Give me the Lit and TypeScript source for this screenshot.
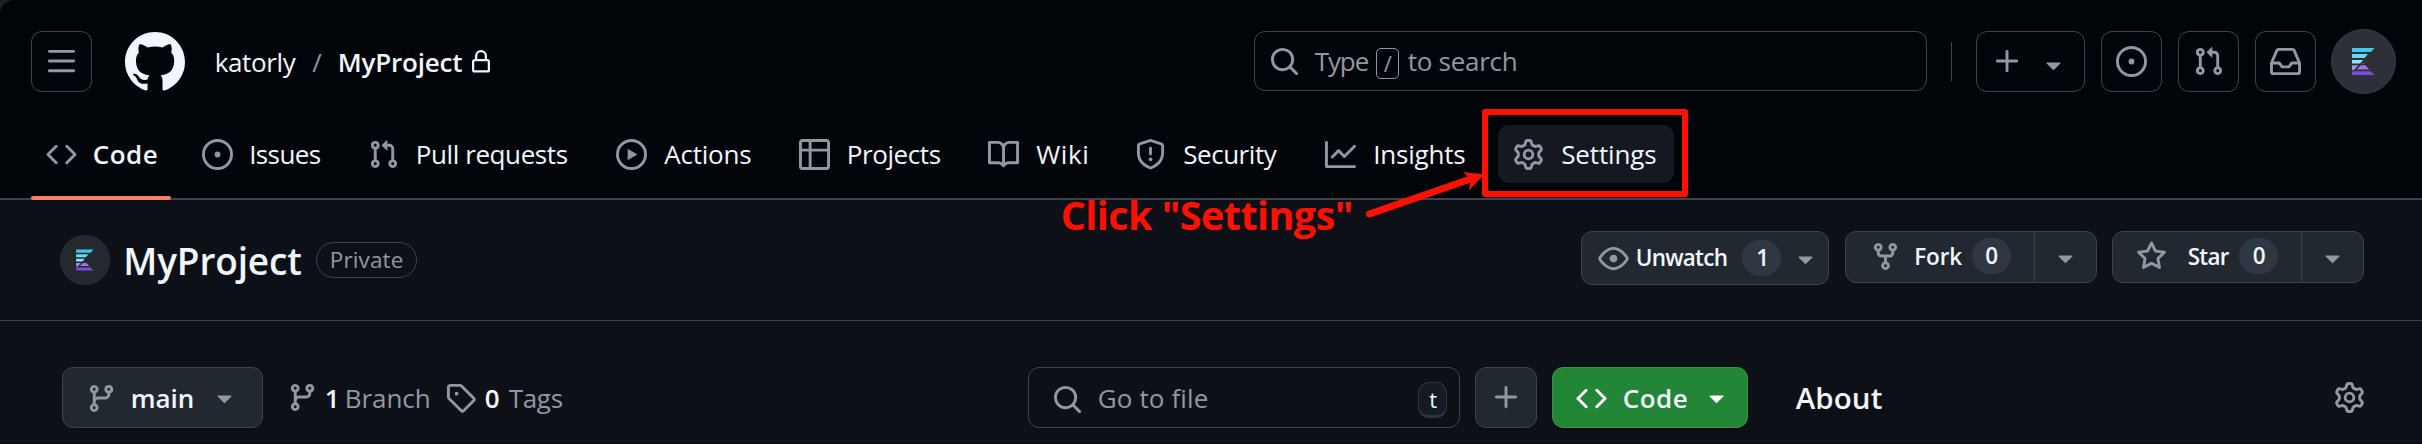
import { LitElement, html, css, svg } from "lit";
import { customElement, property } from "lit/decorators.js";
import { styleMap } from "lit/directives/style-map.js";

const ICONS: Record<string, string> = {
  bars: "M1 2.75A.75.75 0 0 1 1.75 2h12.5a.75.75 0 0 1 0 1.5H1.75A.75.75 0 0 1 1 2.75Zm0 5A.75.75 0 0 1 1.75 7h12.5a.75.75 0 0 1 0 1.5H1.75A.75.75 0 0 1 1 7.75ZM1.75 12h12.5a.75.75 0 0 1 0 1.5H1.75a.75.75 0 0 1 0-1.5Z",
  mark: "M8 0c4.42 0 8 3.58 8 8a8.013 8.013 0 0 1-5.45 7.59c-.4.08-.55-.17-.55-.38 0-.27.01-1.13.01-2.2 0-.75-.25-1.23-.54-1.48 1.78-.2 3.65-.88 3.65-3.95 0-.88-.31-1.59-.82-2.15.08-.2.36-1.02-.08-2.12 0 0-.67-.22-2.2.82-.64-.18-1.32-.27-2-.27-.68 0-1.36.09-2 .27-1.53-1.03-2.2-.82-2.2-.82-.44 1.1-.16 1.92-.08 2.12-.51.56-.82 1.28-.82 2.15 0 3.06 1.86 3.75 3.64 3.95-.23.2-.44.55-.51 1.07-.46.21-1.61.55-2.33-.66-.15-.24-.6-.83-1.23-.82-.67.01-.27.38.01.53.34.19.73.9.82 1.13.16.45.68 1.31 2.69.94 0 .67.01 1.3.01 1.49 0 .21-.15.45-.55.38A7.995 7.995 0 0 1 0 8c0-4.42 3.58-8 8-8Z",
  lock: "M4 4a4 4 0 0 1 8 0v2h.25c.966 0 1.75.784 1.75 1.75v5.5A1.75 1.75 0 0 1 12.25 15h-8.5A1.75 1.75 0 0 1 2 13.25v-5.5C2 6.784 2.784 6 3.75 6H4Zm8.25 3.5h-8.5a.25.25 0 0 0-.25.25v5.5c0 .138.112.25.25.25h8.5a.25.25 0 0 0 .25-.25v-5.5a.25.25 0 0 0-.25-.25ZM10.5 6V4a2.5 2.5 0 1 0-5 0v2Z",
  code: "m11.28 3.22 4.25 4.25a.75.75 0 0 1 0 1.06l-4.25 4.25a.749.749 0 0 1-1.275-.326.749.749 0 0 1 .215-.734L13.94 8l-3.72-3.72a.749.749 0 0 1 .326-1.275.749.749 0 0 1 .734.215Zm-6.56 0a.751.751 0 0 1 1.042.018.751.751 0 0 1 .018 1.042L2.06 8l3.72 3.72a.749.749 0 0 1-.326 1.275.749.749 0 0 1-.734-.215L.47 8.53a.75.75 0 0 1 0-1.06Z",
  issue: "M8 9.5a1.5 1.5 0 1 0 0-3 1.5 1.5 0 0 0 0 3ZM8 0a8 8 0 1 1 0 16A8 8 0 0 1 8 0ZM1.5 8a6.5 6.5 0 1 0 13 0 6.5 6.5 0 0 0-13 0Z",
  pull: "M1.5 3.25a2.25 2.25 0 1 1 3 2.122v5.256a2.251 2.251 0 1 1-1.5 0V5.372A2.25 2.25 0 0 1 1.5 3.25Zm5.677-.177L9.573.677A.25.25 0 0 1 10 .854V2.5h1A2.5 2.5 0 0 1 13.5 5v5.628a2.251 2.251 0 1 1-1.5 0V5a1 1 0 0 0-1-1h-1v1.646a.25.25 0 0 1-.427.177L7.177 3.427a.25.25 0 0 1 0-.354ZM3.75 2.5a.75.75 0 1 0 0 1.5.75.75 0 0 0 0-1.5Zm0 9.5a.75.75 0 1 0 0 1.5.75.75 0 0 0 0-1.5Zm8.25.75a.75.75 0 1 0 1.5 0 .75.75 0 0 0-1.5 0Z",
  play: "M8 0a8 8 0 1 1 0 16A8 8 0 0 1 8 0ZM1.5 8a6.5 6.5 0 1 0 13 0 6.5 6.5 0 0 0-13 0Zm4.879-2.773 4.264 2.559a.25.25 0 0 1 0 .428l-4.264 2.559A.25.25 0 0 1 6 10.559V5.442a.25.25 0 0 1 .379-.215Z",
  table: "M0 1.75C0 .784.784 0 1.75 0h12.5C15.216 0 16 .784 16 1.75v12.5A1.75 1.75 0 0 1 14.25 16H1.75A1.75 1.75 0 0 1 0 14.25ZM6.5 6.5v8h7.75a.25.25 0 0 0 .25-.25V6.5Zm8-1.5V1.75a.25.25 0 0 0-.25-.25H6.5V5Zm-13 1.5v7.75c0 .138.112.25.25.25H5v-8ZM5 5V1.5H1.75a.25.25 0 0 0-.25.25V5Z",
  book: "M0 1.75A.75.75 0 0 1 .75 1h4.253c1.227 0 2.317.59 3 1.501A3.743 3.743 0 0 1 11.006 1h4.245a.75.75 0 0 1 .75.75v10.5a.75.75 0 0 1-.75.75h-4.507a2.25 2.25 0 0 0-1.591.659l-.622.621a.75.75 0 0 1-1.06 0l-.622-.621A2.25 2.25 0 0 0 5.258 13H.75a.75.75 0 0 1-.75-.75Zm7.251 10.324.004-5.073-.002-2.253A2.25 2.25 0 0 0 5.003 2.5H1.5v9h3.757a3.75 3.75 0 0 1 1.994.574ZM8.755 4.75l-.004 7.322a3.752 3.752 0 0 1 1.992-.572H14.5v-9h-3.495a2.25 2.25 0 0 0-2.25 2.25Z",
  shield: "M7.467.133a1.748 1.748 0 0 1 1.066 0l5.25 1.68A1.75 1.75 0 0 1 15 3.48V7c0 1.566-.32 3.182-1.303 4.682-.983 1.498-2.585 2.813-5.032 3.855a1.697 1.697 0 0 1-1.33 0c-2.447-1.042-4.049-2.357-5.032-3.855C1.32 10.182 1 8.566 1 7V3.48a1.75 1.75 0 0 1 1.217-1.667Zm.61 1.429a.25.25 0 0 0-.153 0l-5.25 1.68a.25.25 0 0 0-.174.238V7c0 1.358.275 2.666 1.057 3.86.784 1.194 2.121 2.34 4.366 3.297a.196.196 0 0 0 .154 0c2.245-.956 3.582-2.104 4.366-3.298C13.225 9.666 13.5 8.36 13.5 7V3.48a.251.251 0 0 0-.174-.237l-5.25-1.68ZM8.75 4.75v3a.75.75 0 0 1-1.5 0v-3a.75.75 0 0 1 1.5 0ZM9 10.5a1 1 0 1 1-2 0 1 1 0 0 1 2 0Z",
  graph: "M1.5 1.75V13.5h13.75a.75.75 0 0 1 0 1.5H.75a.75.75 0 0 1-.75-.75V1.75a.75.75 0 0 1 1.5 0Zm14.28 2.53-5.25 5.25a.75.75 0 0 1-1.06 0L7 7.06 4.28 9.78a.751.751 0 0 1-1.042-.018.751.751 0 0 1-.018-1.042l3.25-3.25a.75.75 0 0 1 1.06 0L10 7.94l4.72-4.72a.751.751 0 0 1 1.042.018.751.751 0 0 1 .018 1.042Z",
  gear: "M8 0a8.2 8.2 0 0 1 .701.031C9.444.095 9.99.645 10.16 1.29l.288 1.107c.018.066.079.158.212.224.231.114.454.243.668.386.123.082.233.09.299.071l1.103-.303c.644-.176 1.392.021 1.82.63.27.385.506.792.704 1.218.315.675.111 1.422-.364 1.891l-.814.806c-.049.048-.098.147-.088.294.016.257.016.515 0 .772-.01.147.038.246.088.294l.814.806c.475.469.679 1.216.364 1.891a7.977 7.977 0 0 1-.704 1.217c-.428.61-1.176.807-1.82.63l-1.102-.302c-.067-.019-.177-.011-.3.071a5.909 5.909 0 0 1-.668.386c-.133.066-.194.158-.211.224l-.29 1.106c-.168.646-.715 1.196-1.458 1.26a8.006 8.006 0 0 1-1.402 0c-.743-.064-1.289-.614-1.458-1.26l-.289-1.106c-.018-.066-.079-.158-.212-.224a5.738 5.738 0 0 1-.668-.386c-.123-.082-.233-.09-.299-.071l-1.103.303c-.644.176-1.392-.021-1.82-.63a8.12 8.12 0 0 1-.704-1.218c-.315-.675-.111-1.422.363-1.891l.815-.806c.05-.048.098-.147.088-.294a6.214 6.214 0 0 1 0-.772c.01-.147-.038-.246-.088-.294l-.815-.806C.635 6.045.431 5.298.746 4.623a7.92 7.92 0 0 1 .704-1.217c.428-.61 1.176-.807 1.82-.63l1.102.302c.067.019.177.011.3-.071.214-.143.437-.272.668-.386.133-.066.194-.158.211-.224l.29-1.106C6.009.645 6.556.095 7.299.03 7.53.01 7.764 0 8 0Zm-.571 1.525c-.036.003-.108.036-.137.146l-.289 1.105c-.147.561-.549.967-.998 1.189-.173.086-.34.183-.5.29-.417.278-.97.423-1.529.27l-1.103-.303c-.109-.03-.175.016-.195.045-.22.312-.412.644-.573.99-.014.031-.021.11.059.19l.815.806c.411.406.562.957.53 1.456a4.709 4.709 0 0 0 0 .582c.032.499-.119 1.05-.53 1.456l-.815.806c-.081.08-.073.159-.059.19.162.346.353.677.573.989.02.03.085.076.195.046l1.102-.303c.56-.153 1.113-.008 1.53.27.161.107.328.204.501.29.447.222.85.629.997 1.189l.289 1.105c.029.109.101.143.137.146a6.6 6.6 0 0 0 1.142 0c.036-.003.108-.036.137-.146l.289-1.105c.147-.561.549-.967.998-1.189.173-.086.34-.183.5-.29.417-.278.97-.423 1.529-.27l1.103.303c.109.029.175-.016.195-.045.22-.313.411-.644.573-.99.014-.031.021-.11-.059-.19l-.815-.806c-.411-.406-.562-.957-.53-1.456a4.709 4.709 0 0 0 0-.582c-.032-.499.119-1.05.53-1.456l.815-.806c.081-.08.073-.159.059-.19a6.464 6.464 0 0 0-.573-.989c-.02-.03-.085-.076-.195-.046l-1.102.303c-.56.153-1.113.008-1.53-.27a4.44 4.44 0 0 0-.501-.29c-.447-.222-.85-.629-.997-1.189l-.289-1.105c-.029-.11-.101-.143-.137-.146a6.6 6.6 0 0 0-1.142 0ZM11 8a3 3 0 1 1-6 0 3 3 0 0 1 6 0ZM9.5 8a1.5 1.5 0 1 0-3.001.001A1.5 1.5 0 0 0 9.5 8Z",
  search: "M10.68 11.74a6 6 0 0 1-7.922-8.982 6 6 0 0 1 8.982 7.922l3.04 3.04a.749.749 0 0 1-.326 1.275.749.749 0 0 1-.734-.215ZM11.5 7a4.499 4.499 0 1 0-8.997 0A4.499 4.499 0 0 0 11.5 7Z",
  plus: "M7.75 2a.75.75 0 0 1 .75.75V7h4.25a.75.75 0 0 1 0 1.5H8.5v4.25a.75.75 0 0 1-1.5 0V8.5H2.75a.75.75 0 0 1 0-1.5H7V2.75A.75.75 0 0 1 7.75 2Z",
  caret: "m4.427 7.427 3.396 3.396a.25.25 0 0 0 .354 0l3.396-3.396A.25.25 0 0 0 11.396 7H4.604a.25.25 0 0 0-.177.427Z",
  inbox: "M2.8 2.06A1.75 1.75 0 0 1 4.41 1h7.18c.7 0 1.333.417 1.61 1.06l2.74 6.395c.04.093.06.194.06.295v4.5A1.75 1.75 0 0 1 14.25 15H1.75A1.75 1.75 0 0 1 0 13.25v-4.5c0-.101.02-.202.06-.295Zm1.61.44a.25.25 0 0 0-.23.152L1.887 8H4.75a.75.75 0 0 1 .6.3L6.625 10h2.75l1.275-1.7a.75.75 0 0 1 .6-.3h2.863L11.82 2.652a.25.25 0 0 0-.23-.152Zm10.09 7h-2.875l-1.275 1.7a.75.75 0 0 1-.6.3h-3.5a.75.75 0 0 1-.6-.3L4.375 9.5H1.5v3.75c0 .138.112.25.25.25h12.5a.25.25 0 0 0 .25-.25Z",
  eye: "M8 2c1.981 0 3.671.992 4.933 2.078 1.27 1.091 2.187 2.345 2.637 3.023a1.62 1.62 0 0 1 0 1.798c-.45.678-1.367 1.932-2.637 3.023C11.67 13.008 9.981 14 8 14c-1.981 0-3.671-.992-4.933-2.078C1.797 10.83.88 9.576.43 8.898a1.62 1.62 0 0 1 0-1.798c.45-.677 1.367-1.931 2.637-3.022C4.33 2.992 6.019 2 8 2ZM1.679 7.932a.12.12 0 0 0 0 .136c.411.622 1.241 1.75 2.366 2.717C5.176 11.758 6.527 12.5 8 12.5c1.473 0 2.825-.742 3.955-1.715 1.124-.967 1.954-2.096 2.366-2.717a.12.12 0 0 0 0-.136c-.412-.621-1.242-1.75-2.366-2.717C10.824 4.242 9.473 3.5 8 3.5c-1.473 0-2.825.742-3.955 1.715-1.124.967-1.954 2.096-2.366 2.717ZM8 10a2 2 0 1 1-.001-3.999A2 2 0 0 1 8 10Z",
  fork: "M5 5.372v.878c0 .414.336.75.75.75h4.5a.75.75 0 0 0 .75-.75v-.878a2.25 2.25 0 1 1 1.5 0v.878a2.25 2.25 0 0 1-2.25 2.25h-1.5v2.128a2.251 2.251 0 1 1-1.5 0V8.5h-1.5A2.25 2.25 0 0 1 3.5 6.25v-.878a2.25 2.25 0 1 1 1.5 0ZM5 3.25a.75.75 0 1 0-1.5 0 .75.75 0 0 0 1.5 0Zm6.75.75a.75.75 0 1 0 0-1.5.75.75 0 0 0 0 1.5Zm-3 8.75a.75.75 0 1 0-1.5 0 .75.75 0 0 0 1.5 0Z",
  star: "M8 .25a.75.75 0 0 1 .673.418l1.882 3.815 4.21.612a.75.75 0 0 1 .416 1.279l-3.046 2.97.719 4.192a.751.751 0 0 1-1.088.791L8 12.347l-3.766 1.98a.75.75 0 0 1-1.088-.79l.72-4.194L.818 6.374a.75.75 0 0 1 .416-1.28l4.21-.611L7.327.668A.75.75 0 0 1 8 .25Zm0 2.445L6.615 5.5a.75.75 0 0 1-.564.41l-3.097.45 2.24 2.184a.75.75 0 0 1 .216.664l-.528 3.084 2.769-1.456a.75.75 0 0 1 .698 0l2.77 1.456-.53-3.084a.75.75 0 0 1 .216-.664l2.24-2.183-3.096-.45a.75.75 0 0 1-.564-.41L8 2.694Z",
  branch: "M9.5 3.25a2.25 2.25 0 1 1 3 2.122V6A2.5 2.5 0 0 1 10 8.5H6a1 1 0 0 0-1 1v1.128a2.251 2.251 0 1 1-1.5 0V5.372a2.25 2.25 0 1 1 1.5 0v1.836A2.493 2.493 0 0 1 6 7h4a1 1 0 0 0 1-1v-.628A2.25 2.25 0 0 1 9.5 3.25Zm-6 0a.75.75 0 1 0 1.5 0 .75.75 0 0 0-1.5 0Zm8.25-.75a.75.75 0 1 0 0 1.5.75.75 0 0 0 0-1.5ZM4.25 12a.75.75 0 1 0 0 1.5.75.75 0 0 0 0-1.5Z",
  tag: "M1 7.775V2.75C1 1.784 1.784 1 2.75 1h5.025c.464 0 .91.184 1.238.513l6.25 6.25a1.75 1.75 0 0 1 0 2.474l-5.026 5.026a1.75 1.75 0 0 1-2.474 0l-6.25-6.25A1.752 1.752 0 0 1 1 7.775Zm1.5 0c0 .066.026.13.073.177l6.25 6.25a.25.25 0 0 0 .354 0l5.025-5.025a.25.25 0 0 0 0-.354l-6.25-6.25a.25.25 0 0 0-.177-.073H2.75a.25.25 0 0 0-.25.25ZM6 5a1 1 0 1 1 0 2 1 1 0 0 1 0-2Z",
};

const FAMILY = '"Open Sans", "Noto Sans", sans-serif';
const pen = document.createElement("canvas").getContext("2d")!;

/** Text whose glyphs span exactly `width` pixels, tracked evenly. */
function label(text: string, width: number, size = 26, weight = 400, cls = "") {
  pen.font = `${weight} ${size}px ${FAMILY}`;
  const m = pen.measureText(text);
  const ink = m.actualBoundingBoxRight + m.actualBoundingBoxLeft;
  const tracking = text.length > 1 ? (width - ink) / (text.length - 1) : 0;
  return html`<span class="label ${cls}" style=${styleMap({
    width: `${width}px`,
    fontSize: `${size}px`,
    fontWeight: `${weight}`,
    letterSpacing: `${tracking.toFixed(3)}px`,
    textIndent: `${(m.actualBoundingBoxLeft + 0.7).toFixed(2)}px`,
  })}>${text}</span>`;
}

const icon = (name: string, cls = "") =>
  html`<svg class="icon ${cls}" viewBox="0 0 16 16" aria-hidden="true"><path d=${ICONS[name]}></path></svg>`;

@customElement("user-avatar")
class UserAvatar extends LitElement {
  @property({ type: Boolean, reflect: true }) small = false;
  static styles = css`
    :host { display: block; flex: none; width: 65px; height: 65px; --disc: #2d3036; --rim: #3a3d42; }
    :host([small]) { width: 50px; height: 50px; --disc: #25282d; --rim: #313439; }
    svg { display: block; width: 100%; height: 100%; }
    .disc { fill: var(--disc); stroke: var(--rim); }
  `;
  render() {
    return html`<svg viewBox="0 0 65 65">
      <circle class="disc" cx="32.5" cy="32.5" r="32"></circle>
      ${svg`<path fill="#41c9ec" d="M21 19h22.5l-3.6 4H21z"/>
      <path fill="#66daf3" d="M21 25h16l-3.4 4H21z"/>
      <path fill="#8fe2f8" d="M21 31h11.2l-3.2 3.6h-8z"/>
      <path fill="#9a93ea" d="M21 36.300h6.300L23 41h-2z"/>
      <path fill="#9c74e8" d="M29.800 36.300h4.600L38.200 40.400H25.800zM31.200 34.900l.9-1.200.9 1.200z"/>
      <path fill="#7a4bdd" d="M21 42.200h18.600L43.500 46H21z"/>`}
    </svg>`;
  }
}

// icon, text, glyph span, slot width, space between icon and text
const TABS: [string, string, number, number, number][] = [
  ["code", "Code", 63, 140, 16],
  ["issue", "Issues", 69.5, 149.5, 17.5],
  ["pull", "Pull requests", 150, 232.5, 18.5],
  ["play", "Actions", 87, 167, 16.5],
  ["table", "Projects", 92, 173, 18],
  ["book", "Wiki", 51, 131, 16.5],
  ["shield", "Security", 93.5, 174, 17.5],
  ["graph", "Insights", 90, 172, 18.5],
  ["gear", "Settings", 94, 176, 17.5],
];

@customElement("app-root")
class AppRoot extends LitElement {
  static styles = css`
    :host {
      display: block; position: relative; width: 2422px; height: 444px; overflow: hidden;
      background: #202022; color: #f0f6fc; font-family: "Open Sans", "Noto Sans", sans-serif;
    }
    * { box-sizing: border-box; }
    .label { display: block; flex: none; white-space: nowrap; line-height: 36px; }
    .muted { color: #9198a1; }
    .icon { display: block; flex: none; width: 31px; height: 31px; fill: #9198a1; }
    .row { display: flex; align-items: center; }
    .box { display: flex; align-items: center; flex: none; height: 61px; border: 1px solid #3d444d; border-radius: 11px; }

    header { height: 200px; background: #010409; border-bottom: 2px solid #3d444d; border-radius: 14px 0 0 0; }
    .top { height: 123px; padding: 0 26px 0 31px; }
    .square { width: 61px; justify-content: center; }
    .mark { width: 60px; height: 60px; fill: #f0f6fc; margin: 1px 31px 0 33px; }
    .slash { margin: 0 16.500px 0 15.500px; }
    .lock { width: 24px; height: 24px; fill: #f0f6fc; margin: 0 0 0 7px; }
    .search { width: 673px; height: 60px; margin: 0 24px 1px auto; padding-left: 14px; }
    .search .icon { margin-right: 14px; }
    .key { display: flex; align-items: center; justify-content: center; width: 23px; height: 31px; margin: 4px 8px 0; border: 1px solid #9198a1; border-radius: 5px; }
    .rule { width: 1px; height: 39px; background: #3d444d; margin-right: 24px; }
    .create { width: 109px; padding-left: 15px; gap: 15px; }
    .create .caret { margin-top: 5px; }
    .tools { gap: 16px; }
    .top user-avatar { margin-left: 15px; }

    nav { display: flex; height: 75px; padding: 2px 0 0 31px; gap: 16px; }
    .tab { display: flex; align-items: center; height: 58px; padding-left: 15px; border-radius: 11px; position: relative; }
    .tab:last-child { background: #151820; }
    .tab:first-child::after { content: ""; position: absolute; left: 0; right: 0; bottom: -17px; height: 4px; border-radius: 2px; background: #f78166; }

    .repo { display: flex; height: 121px; padding: 0 58px 0 60px; background: #0d1117; border-bottom: 1px solid #3d444d; }
    .title { gap: 15.500px; }
    .title > .label { margin-top: 2px; }
    .pill { display: flex; align-items: center; justify-content: center; width: 101px; height: 36px; border: 1px solid #3d444d; border-radius: 18px; }
    .actions { display: flex; align-items: flex-start; gap: 15.500px; margin: 31px 0 0 auto; }
    .button { background: #212830; }
    .watch { width: 248px; height: 54px; padding-left: 16px; }
    .watch .icon { margin-right: 7px; }
    .count { display: flex; align-items: center; justify-content: center; width: 39px; height: 36px; border-radius: 18px; background: #2f3742; }
    .watch .count { margin: 0 9px 0 16px; }
    .split { width: 252px; height: 52px; }
    .half { display: flex; align-items: center; width: 189px; height: 100%; padding-left: 24px; border-right: 1px solid #3d444d; }
    .half .icon { margin: 0 15px 2px 0; }
    .half .count { margin: 0 0 2px 10px; }
    .half.starred { padding-left: 23px; }
    .half.starred .icon { margin-right: 21px; }
    .split .caret { margin-left: 15px; }

    .files { display: flex; align-items: center; height: 123px; padding: 30px 57px 0 62px; background: #0d1117; border-bottom: 1px solid #07050e; }
    .files .label { margin-top: 1px; }
    .branch { width: 201px; padding-left: 23px; margin-right: 24px; }
    .branch .lead { margin: 3px 15px 0 0; }
    .branch .caret { margin-left: 17px; }
    .stat { display: flex; align-items: center; }
    .goto { width: 432px; margin-left: auto; padding: 0 12px 0 23px; }
    .goto .icon { margin: 4px 15px 0 0; }
    .t { display: flex; align-items: center; justify-content: center; width: 29px; height: 36px; margin: 5px 0 0 auto; background: #151b23; border: 1px solid #2f353d; border-bottom-width: 3px; border-radius: 11px; }
    .t .label { margin: 0; }
    .add { width: 62px; margin: 0 15px; justify-content: center; }
    .green { width: 196px; padding-left: 23px; background: #238636; border-color: #36934a; box-shadow: 0 2px 0 #05080c; }
    .green .lead { margin: 2px 16px 0 0; }
    .green .icon { fill: #fff; }
    .green .caret { margin-left: 15px; }
    .about { width: 570px; margin-left: 47px; justify-content: space-between; }
    .g1 { margin-left: 7px; margin-right: 11px; }
    .g2 { margin-right: 17px; }
    .g3 { margin-left: 9px; margin-right: 9px; }

    .frame { position: absolute; left: 1482px; top: 109px; width: 206px; height: 88px; border: 6px solid #ff1000; border-radius: 3px; }
    .arrow { position: absolute; inset: 0; width: 2422px; height: 444px; }
    .callout { position: absolute; left: 1062px; top: 197px; color: #ff1000; }
  `;

  render() {
    return html`
      <header>
        <div class="row top">
          <div class="box square">${icon("bars")}</div>
          ${icon("mark", "mark")}
          ${label("katorly", 80, 26)}
          ${label("/", 11, 26, 400, "muted slash")}
          ${label("MyProject", 122.5, 26, 600)}
          ${icon("lock", "lock")}
          <div class="box search">
            ${icon("search")}
            ${label("Type", 54, 26, 400, "muted")}
            <span class="key">${label("/", 9, 22, 400, "muted")}</span>
            ${label("to search", 108, 26, 400, "muted")}
          </div>
          <i class="rule"></i>
          <div class="row tools">
            <div class="box create">${icon("plus")}${icon("caret", "caret")}</div>
            <div class="box square">${icon("issue")}</div>
            <div class="box square">${icon("pull")}</div>
            <div class="box square">${icon("inbox")}</div>
          </div>
          <user-avatar></user-avatar>
        </div>
        <nav>
          ${TABS.map(([name, text, span, slot, space], i) => html`
            <div class="tab" style=${styleMap({ width: `${slot}px`, columnGap: `${space}px` })}>
              ${icon(name)}${label(text, span, 26, i ? 400 : 600)}
            </div>`)}
        </nav>
      </header>

      <section class="repo">
        <div class="row title">
          <user-avatar small></user-avatar>
          ${label("MyProject", 175, 37, 600)}
          <span class="pill">${label("Private", 71, 22.5, 400, "muted")}</span>
        </div>
        <div class="actions">
          <div class="box button watch">
            ${icon("eye")}${label("Unwatch", 90, 22.5, 600)}
            <span class="count">${label("1", 10, 22.5, 600)}</span>${icon("caret")}
          </div>
          <div class="box button split">
            <div class="half">${icon("fork")}${label("Fork", 46, 22.5, 600)}
              <span class="count">${label("0", 13, 22.5, 600)}</span></div>
            ${icon("caret", "caret")}
          </div>
          <div class="box button split">
            <div class="half starred">${icon("star")}${label("Star", 41, 22.5, 600)}
              <span class="count">${label("0", 13, 22.5, 600)}</span></div>
            ${icon("caret", "caret")}
          </div>
        </div>
      </section>

      <section class="files">
        <div class="box button branch">${icon("branch", "lead")}${label("main", 60, 26, 600)}${icon("caret", "caret")}</div>
        <div class="stat">
          ${icon("branch")}${label("1", 10, 26, 600, "g1")}${label("Branch", 82, 26, 400, "muted g2")}
          ${icon("tag")}${label("0", 14, 26, 600, "g3")}${label("Tags", 54, 26, 400, "muted")}
        </div>
        <div class="box goto">
          ${icon("search")}${label("Go to file", 109, 26, 400, "muted")}
          <span class="t">${label("t", 8, 22, 400)}</span>
        </div>
        <div class="box button add">${icon("plus")}</div>
        <div class="box green">${icon("code", "lead")}${label("Code", 63, 26, 600)}${icon("caret", "caret")}</div>
        <div class="row about">${label("About", 86, 29.5, 600)}${icon("gear")}</div>
      </section>

      <div class="frame"></div>
      <svg class="arrow" viewBox="0 0 2422 444">
        <path d="M1369.500 214L1472 178.500" stroke="#ff1000" stroke-width="7" stroke-linecap="round"></path>
        <path d="M1463 172L1484 174.500L1469 190.500L1471 179z" fill="#ff1000"></path>
      </svg>
      <div class="callout">${label('Click "Settings"', 289, 39.5, 700)}</div>
    `;
  }
}
